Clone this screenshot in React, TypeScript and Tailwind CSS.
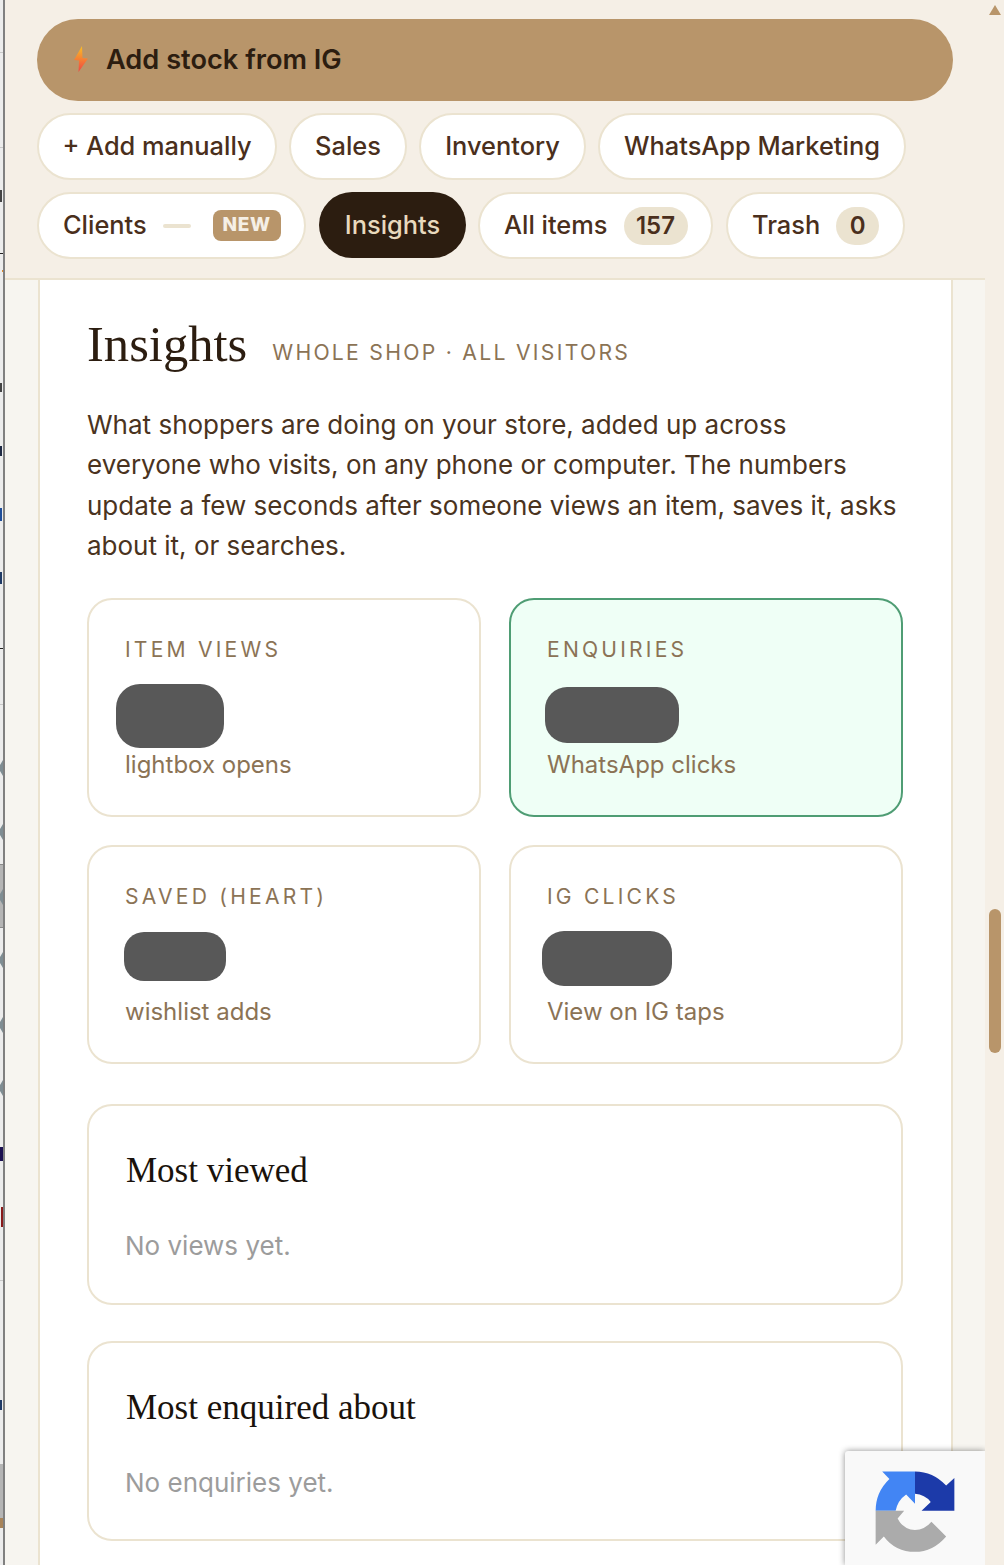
import React from 'react';

const pill = 'flex items-center h-[67px] rounded-full border-2 border-[#ebe3d0] bg-white text-[#4a2f1c] text-[25.4px] font-medium';

const Stat = ({ label, note, blob, green }: { label: string; note: string; blob: string; green?: boolean }) => (
  <div className={`h-[219px] rounded-[25px] border-2 pl-[36px] pt-[35px] ${green ? 'border-[#4f9d74] bg-[#effff6]' : 'border-[#ebe3d0] bg-white'}`}>
    <div className="text-[21.1px] leading-[30px] tracking-[3.2px] text-[#8b7355]">{label}</div>
    <div className="mt-[18px] flex h-[68px] items-start">
      <div className={`bg-[#585858] ${blob}`} />
    </div>
    <div className="text-[24px] leading-[30px] mt-[-1px] text-[#8b7355]">{note}</div>
  </div>
);

const ListCard = ({ title, empty, height }: { title: string; empty: string; height: string }) => (
  <div className={`rounded-[25px] border-2 border-[#ebe3d0] bg-white pl-[36px] pt-[43px] ${height}`}>
    <h3 className="ml-[1px] font-['Liberation_Serif',serif] text-[35px] leading-[44px] text-[#1a120b]">{title}</h3>
    <p className="mt-[37px] text-[26px] leading-[32px] text-[#9c9c9c]">{empty}</p>
  </div>
);

const Bolt = () => (
  <svg width="16" height="28" viewBox="0 0 16 28" className="shrink-0 -translate-y-px">
    <defs>
      <linearGradient id="bolt" x1="0" y1="0" x2="0" y2="1">
        <stop offset="0" stopColor="#fbbf24" />
        <stop offset="1" stopColor="#ef4444" />
      </linearGradient>
    </defs>
    <path d="M9 1 L1 15 L6 15.5 L5.5 27 L15 13.5 L9.5 13 Z" fill="url(#bolt)" />
  </svg>
);

// slice of the window sitting behind this one
const BehindStrip = () => (
  <svg width="3" height="1565" className="shrink-0 bg-[#ececec]">
    <rect y="52" width="3" height="1" fill="#c8c8c8" />
    <rect y="147" width="3" height="1" fill="#c8c8c8" />
    <rect y="190" width="2" height="12" fill="#444" />
    <rect y="253" width="3" height="1" fill="#222" />
    <rect x="2" y="270" width="1" height="2" fill="#e08a2c" />
    <rect y="383" width="2" height="9" fill="#444" />
    <rect y="446" width="2" height="10" fill="#1f2a44" />
    <rect y="508" width="2" height="13" fill="#1f4e9a" />
    <rect y="572" width="2" height="12" fill="#1f3a66" />
    <rect y="648" width="3" height="1" fill="#222" />
    <rect y="704" width="3" height="1" fill="#c8c8c8" />
    <rect y="864" width="3" height="64" fill="#b5b5b5" />
    <rect y="864" width="3" height="1" fill="#8a8a8a" />
    <rect y="927" width="3" height="1" fill="#8a8a8a" />
    {[768, 832, 897, 960, 1025, 1088].map((y) => (
      <polygon key={y} points={`3,${y - 8} 3,${y + 8} 0,${y + 3} 0,${y - 3}`} fill="#7f8d93" />
    ))}
    <rect y="1147" width="3" height="14" fill="#1a1050" />
    <rect x="1" y="1207" width="2" height="20" fill="#8a1a1a" />
    <rect y="1280" width="3" height="1" fill="#c8c8c8" />
    <rect y="1400" width="2" height="10" fill="#1f3a66" />
    <rect y="1464" width="3" height="54" fill="#b5b5b5" />
    <rect y="1518" width="3" height="10" fill="#a8845a" />
  </svg>
);

const Recaptcha = () => (
  <div className="absolute right-0 bottom-0 flex h-[114px] w-[140px] justify-center rounded-tl-[3px] bg-[#f9f9f9] pt-[19px] pr-[1px] shadow-[0_0_6px_rgba(0,0,0,0.45)]">
    <svg width="82" height="84" viewBox="160 148 250 255" className="blur-[0.6px]">
      <path d="M185 152 H285 V250 L258 222 Q232 240 226 272 H165 Q165 215 207 175 Z" fill="#4285f4" />
      <path d="M285 152 Q340 152 380 195 L405 172 V272 H305 L333 245 Q315 222 285 220 Z" fill="#1c3aa9" />
      <path d="M165 272 H252 L232 295 Q250 330 285 330 Q315 330 335 305 L380 350 Q340 397 285 397 Q225 397 190 350 L165 375 Z" fill="#ababab" />
    </svg>
  </div>
);

export default function App() {
  return (
    <div className="flex h-[1565px] w-[1004px] overflow-hidden bg-[#f5efe6] font-['Inter',sans-serif]">
      <BehindStrip />
      <div className="w-[2px] shrink-0 bg-[#808080]" />

      <div className="relative flex w-[980px] shrink-0 flex-col overflow-hidden">
        {/* Toolbar */}
        <header className="h-[280px] shrink-0 border-b-2 border-[#ebe3d0] bg-[#f5efe6] pl-[32px] pt-[19px]">
          <button className="flex h-[82px] w-[916px] items-center gap-[17px] rounded-full bg-[#b8956a] pl-[36px] text-[27.2px] font-semibold text-[#2c1d10]">
            <Bolt />
            Add stock from IG
          </button>
          <div className="mt-[12px] flex gap-[12px]">
            <div className={`${pill} w-[240px] justify-center`}>+ Add manually</div>
            <div className={`${pill} w-[118px] justify-center`}>Sales</div>
            <div className={`${pill} w-[167px] justify-center`}>Inventory</div>
            <div className={`${pill} w-[308px] justify-center`}>WhatsApp Marketing</div>
          </div>
          <div className="mt-[12px] flex">
            <div className={`${pill} h-[66px] w-[269px] pl-[24px]`}>
              Clients
              <span className="ml-[16px] h-[4px] w-[28px] rounded-full bg-[#ebe3d0]" />
              <span className="ml-[22px] flex h-[31px] w-[68px] items-center justify-center rounded-[8px] bg-[#b8956a] text-[19px] font-extrabold tracking-[0.8px] text-[#f5efe6]">NEW</span>
            </div>
            <div className="ml-[13px] flex h-[66px] w-[147px] items-center justify-center rounded-full bg-[#2c1d10] text-[25.4px] font-medium text-[#e8d9bd]">Insights</div>
            <div className={`${pill} ml-[12px] h-[66px] w-[235px] pl-[24px]`}>
              All items
              <span className="ml-[16px] flex h-[38px] w-[64px] items-center justify-center rounded-full bg-[#ebe3d0] text-[24px] font-semibold">157</span>
            </div>
            <div className={`${pill} ml-[13px] h-[66px] w-[179px] pl-[24px]`}>
              Trash
              <span className="ml-[16px] flex h-[38px] w-[43px] items-center justify-center rounded-full bg-[#ebe3d0] text-[24px] font-semibold">0</span>
            </div>
          </div>
        </header>

        {/* Page body */}
        <main className="flex-1 bg-[#f7f5f0] pl-[33px] pr-[32px]">
          <div className="h-full border-x-2 border-[#ebe3d0] bg-white pl-[47px] pr-[48px] pt-[32px]">
            <div className="flex items-baseline gap-[25px]">
              <h1 className="font-['Liberation_Serif',serif] text-[50.6px] leading-[64px] text-[#2c1d10]">Insights</h1>
              <span className="-translate-y-px text-[21.2px] tracking-[2.27px] text-[#8b7355]">WHOLE SHOP · ALL VISITORS</span>
            </div>
            <p className="mt-[29px] text-[26px] leading-[40.4px] text-[#4a3320]">
              What shoppers are doing on your store, added up across everyone who visits, on any phone or computer. The numbers update a few seconds after someone views an item, saves it, asks about it, or searches.
            </p>

            <div className="mt-[31px] grid grid-cols-2 gap-[28px]">
              <Stat label="ITEM VIEWS" note="lightbox opens" blob="mt-[1px] ml-[-9px] h-[64px] w-[108px] rounded-[24px]" />
              <Stat label="ENQUIRIES" note="WhatsApp clicks" blob="mt-[4px] ml-[-2px] h-[56px] w-[134px] rounded-[22px]" green />
              <Stat label="SAVED (HEART)" note="wishlist adds" blob="mt-[2px] ml-[-1px] h-[49px] w-[102px] rounded-[20px]" />
              <Stat label="IG CLICKS" note="View on IG taps" blob="mt-[1px] ml-[-5px] h-[55px] w-[130px] rounded-[22px]" />
            </div>

            <div className="mt-[40px] flex flex-col gap-[36px]">
              <ListCard title="Most viewed" empty="No views yet." height="h-[201px]" />
              <ListCard title="Most enquired about" empty="No enquiries yet." height="h-[200px]" />
            </div>
          </div>
        </main>

        <Recaptcha />
      </div>

      {/* Scrollbar */}
      <div className="relative flex-1 bg-[#f5efe6]">
        <div className="absolute left-[4px] top-[5px] h-0 w-0 border-x-[6px] border-b-[10px] border-x-transparent border-b-[#b8956a]" />
        <div className="absolute left-[4px] top-[909px] h-[144px] w-[12px] rounded-full bg-[#b8956a]" />
      </div>
    </div>
  );
}
